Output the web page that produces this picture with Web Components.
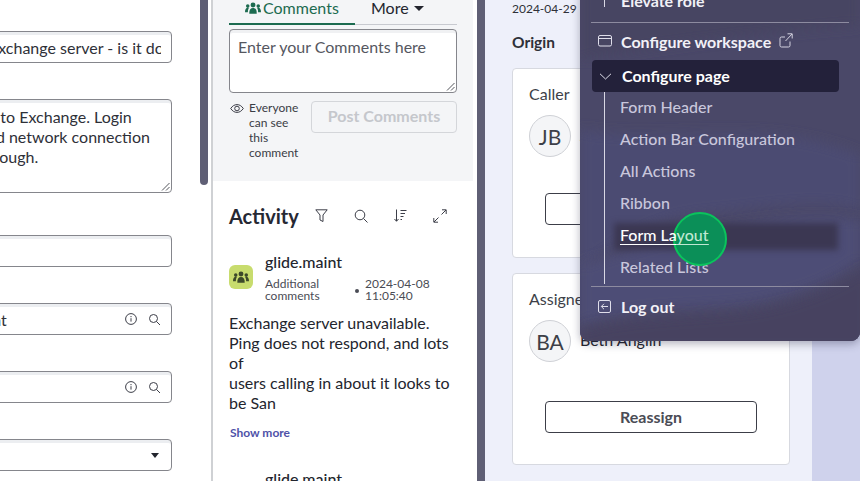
<!DOCTYPE html>
<html lang="en">
<head>
<meta charset="utf-8">
<title>Incident</title>
<style>
  html, body { margin: 0; width: 860px; height: 481px; overflow: hidden; background: #fff; }
  body { font-family: Lato, "Liberation Sans", sans-serif; color: #23252e; }
</style>
</head>
<body>
<app-shell>
  <form-panel slot="form">
    <form-field top="31" pad="48" value="Exchange server - is it down"></form-field>
    <form-field kind="area" top="36" pad="38" lines="go to Exchange. Login&#10;and network connection&#10;through."></form-field>
    <form-field top="42"></form-field>
    <form-field kind="ref" top="36" value="Incident"></form-field>
    <form-field kind="ref" top="36" value="Server"></form-field>
    <form-field kind="select" top="36"></form-field>
  </form-panel>
  <activity-panel slot="activity">
    <activity-entry name="glide.maint" date="2024-04-08" time="11:05:40" kind="Additional comments" show-more>Exchange server unavailable.<br>Ping does not respond, and lots of<br>users calling in about it looks to be San</activity-entry>
    <activity-entry name="glide.maint" plain></activity-entry>
  </activity-panel>
  <side-panel slot="side">
    <user-card label="Caller" initials="JB" name="Joe Bloggs" action="Reassign" first></user-card>
    <user-card label="Assigned to" initials="BA" name="Beth Anglin" action="Reassign"></user-card>
  </side-panel>
</app-shell>
<nav-menu>
  <menu-item icon="none">Elevate role</menu-item>
  <menu-divider style="margin: 5px 0 3px"></menu-divider>
  <menu-item icon="window" external>Configure workspace</menu-item>
  <menu-item icon="chevron" active style="margin-top: 2px">Configure page</menu-item>
  <sub-menu>
    <sub-item>Form Header</sub-item>
    <sub-item>Action Bar Configuration</sub-item>
    <sub-item>All Actions</sub-item>
    <sub-item>Ribbon</sub-item>
    <sub-item hover>Form La<span style="color: #bfe8d2; text-decoration: underline 1px; text-underline-offset: 3px">yout</span></sub-item>
    <sub-item>Related Lists</sub-item>
  </sub-menu>
  <menu-divider style="margin: 2px 0 4px"></menu-divider>
  <menu-item icon="logout">Log out</menu-item>
</nav-menu>

<script>
function define(name, css, html) {
  customElements.define(name, class extends HTMLElement {
    constructor() {
      super();
      const shadow = this.attachShadow({ mode: 'open' });
      const render = typeof html === 'function' ? html(this) : html;
      shadow.innerHTML = `<style>${css}</style>${render}`;
    }
  });
}

const searchIcon = `<svg width="13" height="13" viewBox="0 0 13 13" fill="none" stroke="currentColor" stroke-width="1"><circle cx="5.5" cy="5.5" r="4"/><path d="M8.5 8.5l3.5 3.5"/></svg>`;
const infoIcon = `<svg width="12" height="12" viewBox="0 0 12 12" fill="none" stroke="currentColor" stroke-width="1"><circle cx="6" cy="6" r="5.400"/><path d="M6 5.200v3.400M6 3v1.200"/></svg>`;
const groupIcon = (w, h) => `<svg width="${w}" height="${h}" viewBox="0 0 17 12" fill="currentColor"><circle cx="8.500" cy="2.800" r="2.600"/><path d="M4.600 12c-.3-4 1.200-6 3.900-6s4.200 2 3.900 6z"/><circle cx="2.900" cy="4" r="1.900"/><path d="M0 10.500c0-3 1-4.700 2.900-4.700.5 0 .9.100 1.200.300-.8 1.200-1.100 2.700-1 4.400z"/><circle cx="14.100" cy="4" r="1.900"/><path d="M17 10.500c0-3-1-4.700-2.900-4.700-.5 0-.9.100-1.200.300.8 1.200 1.100 2.700 1 4.400z"/></svg>`;
const grip = `<svg class="grip" width="9" height="9" viewBox="0 0 9 9" stroke="#55565c" stroke-width="1"><path d="M1 8.500L8.500 1M5 8.500L8.500 5"/></svg>`;

define('app-shell', `
  :host { display: flex; width: 860px; height: 481px; overflow: hidden; }
  .bar { width: 8px; background: #5f5f75; flex: none; }
  .scroll { height: 185px; border-radius: 0 0 4px 4px; }
  .gap { width: 3px; flex: none; }
  .rule { width: 2px; background: #cfd1d4; flex: none; }
`, `
  <slot name="form"></slot>
  <div class="bar scroll"></div>
  <div class="gap"></div>
  <div class="rule"></div>
  <slot name="activity"></slot>
  <div class="bar"></div>
  <slot name="side"></slot>
`);

define('form-panel', `
  :host { display: block; width: 200px; height: 481px; flex: none; overflow: hidden; background: #fff; }
  .col { display: flex; flex-direction: column; width: 232px; margin-left: -60px; }
`, `<div class="col"><slot></slot></div>`);

define('form-field', `
  :host { display: block; font-size: 16px; color: #2e3038; }
  .box { box-sizing: border-box; border: 1px solid #85868c; border-radius: 4px; background: #fff;
         box-shadow: inset 0 3px 0 #eceef1; height: 32px; display: flex; align-items: center; padding: 0 10px 0 9px; gap: 10px; white-space: nowrap; overflow: hidden; }
  .text { flex: 1; overflow: hidden; min-width: 0; }
  .clip { display: block; width: 172px; overflow: hidden; }
  .area { height: 94px; display: block; padding-top: 7px; padding-bottom: 0; line-height: 20px; white-space: pre; position: relative; }
  .area .grip { position: absolute; right: 1px; bottom: 1px; }
  .ic { display: flex; color: #3c3e48; }
  .ic.info { margin-right: 1px; margin-left: -1px; }
  .caret { width: 0; height: 0; border: 4.500px solid transparent; border-top: 5px solid #23252e; border-bottom: 0; margin-right: 2px; }
`, (el) => {
  const kind = el.getAttribute('kind') || 'text';
  const top = el.getAttribute('top');
  const value = el.getAttribute('value') || '';
  const pad = el.getAttribute('pad') || 9;
  const wrap = (inner) => `<div style="margin-top:${top}px">${inner}</div>`;
  if (kind === 'area') {
    return wrap(`<div class="box area" style="padding-left:${pad}px">${el.getAttribute('lines')}${grip}</div>`);
  }
  if (kind === 'ref') {
    return wrap(`<div class="box"><span class="text">${value}</span><span class="ic info">${infoIcon}</span><span class="ic">${searchIcon}</span></div>`);
  }
  if (kind === 'select') {
    return wrap(`<div class="box"><span class="text"></span><span class="caret"></span></div>`);
  }
  return wrap(`<div class="box" style="padding-left:${pad}px"><span class="clip">${value}</span></div>`);
});

define('activity-panel', `
  :host { display: block; width: 264px; height: 481px; flex: none; overflow: hidden; background: #fff; }
  .composer { background: #f4f5f7; height: 181px; box-sizing: border-box; padding: 0 16px; width: 260px; }
  .tabs { display: flex; height: 25px; border-bottom: 1px solid #c8cad0; box-sizing: border-box; }
  .tab { display: flex; align-items: flex-start; font-size: 16px; line-height: 17px; white-space: nowrap; }
  .tab.on { width: 126px; box-sizing: border-box; color: #1c6b50; padding-left: 16px; gap: 2px; border-bottom: 2px solid #1c6b50; height: 25px; }
  .tab.on svg { margin-top: 2px; }
  .tab.on span { margin-top: -1px; }
  .tab.more { padding-left: 16px; color: #23252e; line-height: 16px; gap: 5px; }
  .caret { width: 0; height: 0; border: 5px solid transparent; border-top: 5.500px solid #23252e; border-bottom: 0; margin-top: 6px; }
  .input { box-sizing: border-box; margin-top: 4px; height: 64px; border: 1px solid #85868c; border-radius: 4px; background: #fff; box-shadow: inset 0 3px 0 #f0f1f3; padding: 6px 8px; font-size: 16px; line-height: 22px; color: #55575f; position: relative; }
  .input svg { position: absolute; right: 1px; bottom: 1px; }
  .row { display: flex; margin-top: 8px; }
  .eye { margin: 3px 0 0 1px; color: #3c3e48; flex: none; }
  .note { width: 60px; font-size: 12px; line-height: 15px; margin: -1px 0 0 5px; color: #3a3c45; }
  .post { margin-left: 2px; width: 146px; height: 32px; box-sizing: border-box; border: 1px solid #d4d6da; border-radius: 4px; font-size: 16px; font-weight: 700; color: #c5c7cc; text-align: center; line-height: 28px; flex: none; }
  .head { display: flex; align-items: center; padding: 23px 0 0 16px; height: 24px; color: #23252e; }
  h2 { margin: 0; font-size: 20px; font-weight: 700; width: 77px; color: #262833; }
  .tools { display: flex; color: #3c3e48; }
  .tools span { display: flex; justify-content: center; width: 40px; }
  .list { padding: 27px 0 0 16px; width: 232px; }
`, `
  <div class="composer">
    <div class="tabs">
      <div class="tab on">${groupIcon(16, 12)}<span>Comments</span></div>
      <div class="tab more"><span>More</span><span class="caret"></span></div>
    </div>
    <div class="input">Enter your Comments here${grip}</div>
    <div class="row">
      <svg class="eye" width="14" height="9" viewBox="0 0 14 9" fill="none" stroke="currentColor" stroke-width="1"><path d="M.7 4.500C2.500 1.800 4.600.600 7 .600s4.500 1.200 6.300 3.900C11.500 7.200 9.400 8.400 7 8.400S2.500 7.200.7 4.500z"/><circle cx="7" cy="4.500" r="2.300"/></svg>
      <div class="note">Everyone can see this comment</div>
      <div class="post">Post Comments</div>
    </div>
  </div>
  <div class="head">
    <h2>Activity</h2>
    <div class="tools">
      <span style="width:30px"><svg width="13" height="14" viewBox="0 0 13 14" fill="none" stroke="currentColor"><path d="M.8 .8h11.400L8 6v6.500L5 11V6z"/></svg></span>
      <span style="width:50px"><svg width="14" height="14" viewBox="0 0 14 14" fill="none" stroke="currentColor"><circle cx="6" cy="6" r="4.800"/><path d="M9.500 9.500l4 4"/></svg></span>
      <span style="width:28px"><svg width="13" height="13" viewBox="0 0 13 13" fill="none" stroke="currentColor"><path d="M2.500 .500v11.500M.5 10l2 2.300 2-2.300M6.500 1.500h6M6.500 4.500h4.500M6.500 7.500h3M6.500 10.500h1.500"/></svg></span>
      <span style="width:52px"><svg width="14" height="14" viewBox="0 0 14 14" fill="none" stroke="currentColor"><path d="M8.500 5.500L13 1M9 .800h4.200V5M5.500 8.500L1 13M5 13.200H.800V9"/></svg></span>
    </div>
  </div>
  <div class="list"><slot></slot></div>
`);

define('activity-entry', `
  :host { display: block; }
  .top { display: flex; gap: 12px; }
  .avatar { width: 24px; height: 24px; border-radius: 6px; background: #c8dc6e; color: #3d4a2a; display: flex; align-items: center; justify-content: center; margin-top: 10px; flex: none; }
  .plain .avatar { background: #f7f8f2; }
  .name { font-size: 16px; font-weight: 500; line-height: 18px; color: #23252e; margin-top: -2px; }
  .meta { display: flex; font-size: 12px; line-height: 12px; color: #4a4c55; margin-top: 7px; }
  .kind { width: 90px; }
  .dot { width: 4px; height: 4px; border-radius: 50%; background: #4a4c55; margin-top: 11px; }
  .when { margin-left: 6px; margin-top: 0; }
  .body { margin-top: 11px; font-size: 16px; line-height: 20px; color: #23252e; width: 232px; }
  .more { margin-top: 13px; font-size: 12px; font-weight: 700; color: #4f52a8; line-height: 14px; margin-left: 1px; }
  :host([plain]) { margin-top: 32px; }
`, (el) => {
  const plain = el.hasAttribute('plain');
  if (plain) {
    return `<div class="plain top"><div class="avatar"></div><div class="name">${el.getAttribute('name')}</div></div>`;
  }
  return `
    <div class="top">
      <div class="avatar">${groupIcon(16, 12)}</div>
      <div>
        <div class="name">${el.getAttribute('name')}</div>
        <div class="meta">
          <div class="kind">${el.getAttribute('kind')}</div>
          <div class="dot"></div>
          <div class="when">${el.getAttribute('date')}<br>${el.getAttribute('time')}</div>
        </div>
      </div>
    </div>
    <div class="body"><slot></slot></div>
    ${el.hasAttribute('show-more') ? '<div class="more">Show more</div>' : ''}`;
});

define('side-panel', `
  :host { display: block; flex: 1; height: 481px; background: linear-gradient(90deg, #eef0fa 0 327px, #cfd2ec 327px); box-sizing: border-box; }
  .col { width: 278px; margin-left: 27px; }
  .date { font-size: 12px; line-height: 16px; padding-top: 1px; color: #2e3038; }
  h3 { margin: 15px 0 0; font-size: 15.500px; line-height: 20px; font-weight: 700; color: #2e3038; }
`, `
  <div class="col">
    <div class="date">2024-04-29</div>
    <h3>Origin</h3>
    <slot></slot>
  </div>
`);

define('user-card', `
  :host { display: block; box-sizing: border-box; width: 278px; background: #fff; border: 1px solid #d7d9e0; border-radius: 4px; padding: 15px 16px 0; margin-top: 15px; height: 192px; }
  :host([first]) { margin-top: 16px; height: 190px; }
  .label { font-size: 16px; line-height: 20px; color: #3d3f48; }
  .who { display: flex; align-items: center; gap: 9px; margin-top: 11px; }
  .avatar { width: 42px; height: 42px; box-sizing: border-box; border: 1px solid #cfd1d6; border-radius: 50%; background: #f4f5f7; display: flex; align-items: center; justify-content: center; font-size: 21px; color: #3d3f48; flex: none; }
  .name { font-size: 16px; color: #23252e; margin-top: -4px; }
  .btn { box-sizing: border-box; margin: 39px 0 0 16px; width: 212px; height: 32px; border: 1px solid #3c3e48; border-radius: 4px; font-size: 16px; font-weight: 700; text-align: center; line-height: 30px; color: #4a4c55; }
  :host([first]) .btn { margin-top: 36px; }
`, (el) => `
  <div class="label">${el.getAttribute('label')}</div>
  <div class="who"><div class="avatar">${el.getAttribute('initials')}</div><div class="name">${el.getAttribute('name')}</div></div>
  <div class="btn">${el.getAttribute('action')}</div>
`);

define('nav-menu', `
  :host { position: absolute; left: 580px; top: -15px; width: 280px; height: 356px; box-sizing: border-box; border-radius: 0 0 9px 9px; padding: 0 11px; overflow: hidden;
          background: #4a4766; box-shadow: 0 3px 8px rgba(40, 40, 70, .35); color: #fff; }
  .wash { position: absolute; inset: 0; }
  .in { position: relative; display: flex; flex-direction: column; }
`, `
  <svg class="wash" width="280" height="356" viewBox="0 0 280 356" preserveAspectRatio="none">
    <defs><filter id="b"><feGaussianBlur stdDeviation="6"/></filter></defs>
    <rect width="280" height="356" fill="#4a4868"/>
    <path d="M0 75 C60 62 170 48 280 40 V-10 H0z" fill="#474462" filter="url(#b)"/>
    <path d="M0 145 C90 160 180 130 280 170 V225 C240 212 190 222 130 228 C70 232 30 262 0 285z" fill="#4c4b72" filter="url(#b)"/>
    <path d="M0 340 C50 320 120 325 170 318 C220 310 255 295 280 275 V235 C220 225 130 240 0 280z" fill="#4d4d76" filter="url(#b)"/>
    <path d="M0 345 C60 330 130 332 175 325 C225 317 260 300 290 280 V366 H0z" fill="#474260" filter="url(#b)"/>
  </svg>
  <div class="in"><slot></slot></div>
`);

define('menu-item', `
  :host { display: block; }
  .row { display: flex; align-items: center; height: 32px; padding-bottom: 2px; font-size: 16px; font-weight: 700; color: #f2f1f7; border-radius: 4px; padding-left: 6px; width: 247px; box-sizing: border-box; margin-left: 1px; }
  .row.on { background: #23213a; color: #fff; }
  .ic { display: flex; width: 23px; flex: none; }
  .ic.chev { width: 24px; margin-left: 1px; margin-right: -1px; margin-top: 2px; }
  .none { align-self: flex-start; height: 22px; width: 23px; box-sizing: border-box; }
  .none i { display: block; width: 1px; height: 22px; margin-left: 6px; background: #d9d8e4; }
  .ext { margin-left: 8px; display: flex; margin-top: -2px; }
`, (el) => {
  const icons = {
    window: `<svg width="14" height="12" viewBox="0 0 14 12" fill="none" stroke="#dfdeea"><rect x=".5" y=".5" width="13" height="10.500" rx="1.500"/><path d="M.5 3.500h13"/></svg>`,
    chevron: `<svg width="13" height="7" viewBox="0 0 13 7" fill="none" stroke="#dfdeea"><path d="M1 .8l5.500 5.200L12 .8"/></svg>`,
    logout: `<svg width="13" height="13" viewBox="0 0 13 13" fill="none" stroke="#dfdeea"><rect x=".5" y=".5" width="12" height="12" rx="1.500"/><path d="M10 6.500H3.500M6 3.800L3.300 6.500 6 9.200"/></svg>`,
    none: '<i></i>'
  };
  const icon = el.getAttribute('icon');
  const cls = icon === 'none' ? 'none' : icon === 'chevron' ? 'chev' : '';
  const ext = el.hasAttribute('external') ? `<span class="ext"><svg width="14" height="15" viewBox="0 0 14 15" fill="none" stroke="#d4d2e0"><path d="M11 8.500v4a1.500 1.500 0 0 1-1.500 1.500h-7A1.500 1.500 0 0 1 1 12.500v-7A1.500 1.500 0 0 1 2.500 4H6M8.500 .8h4.700v4.700M13 1L6.500 8"/></svg></span>` : '';
  return `<div class="row ${el.hasAttribute('active') ? 'on' : ''}"><span class="ic ${cls}">${icons[icon]}</span><slot></slot>${ext}</div>`;
});

define('menu-divider', `
  :host { display: block; height: 1px; background: #8d8ba0; width: 258px; }
`, ``);

define('sub-menu', `
  :host { display: block; margin-left: 13px; border-left: 1px solid #d9d8e4; padding-left: 15px; height: 192px; }
`, `<slot></slot>`);

define('sub-item', `
  :host { display: block; position: relative; height: 32px; line-height: 29px; font-size: 16px; font-weight: 500; color: #c9c7dc; }
  :host([hover]) { color: #fff; }
  :host([hover]) .t { text-decoration: underline 1px; text-underline-offset: 3px; z-index: 2; }
  .bg { position: absolute; left: -6px; top: 3px; width: 224px; height: 27px; background: #3b3752; filter: blur(3px); }
  .t { position: relative; }
  .marker { position: absolute; left: 53px; top: -8px; width: 54px; height: 54px; box-sizing: border-box; border: 2px solid #0ac45c; border-radius: 50%; background: #0b8f58; z-index: 1; }
`, (el) => `${el.hasAttribute('hover') ? '<div class="bg"></div><div class="marker"></div>' : ''}<span class="t"><slot></slot></span>`);
</script>
</body>
</html>
